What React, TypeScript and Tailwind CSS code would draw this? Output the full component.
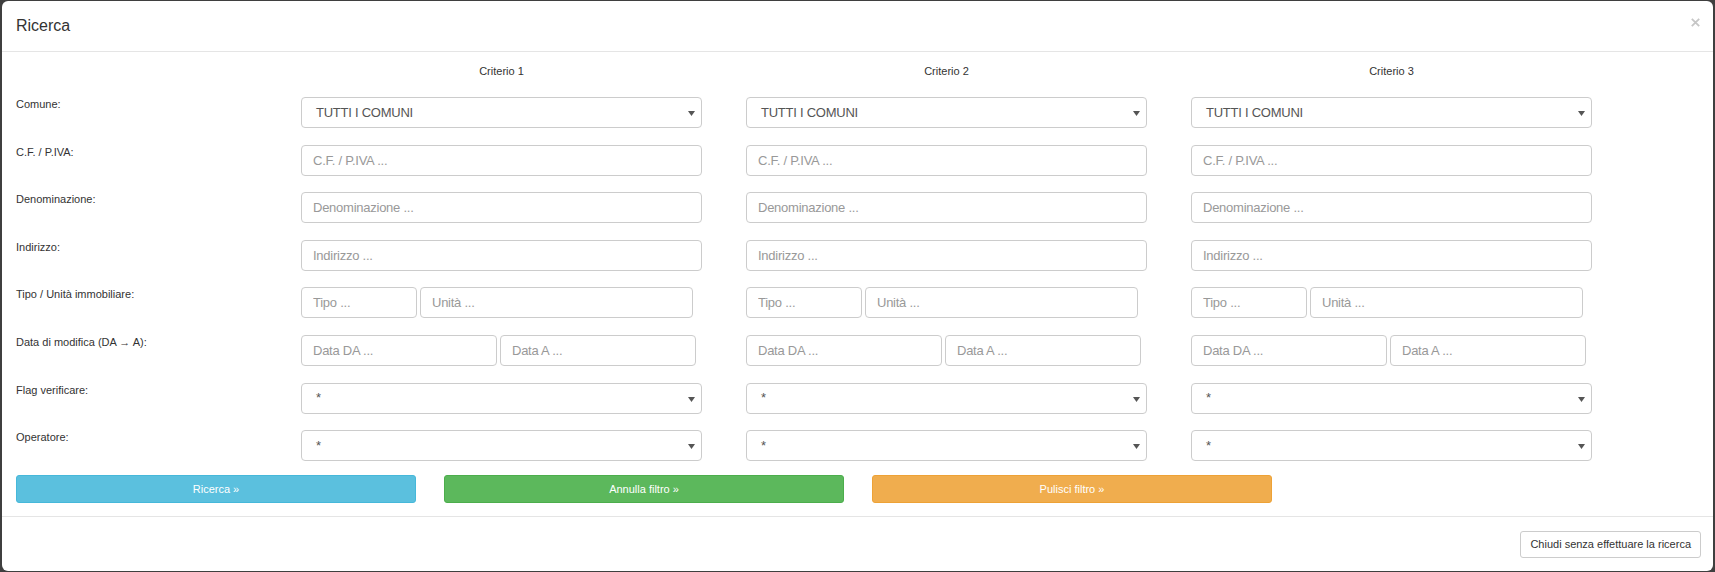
import React from "react";

const CRITERI = [1, 2, 3];

const Arrow: React.FC = () => (
  <svg width="7" height="5" viewBox="0 0 7 5" className="absolute right-[6px] top-[13px]">
    <polygon points="0,0 7,0 3.5,5" fill="#555" />
  </svg>
);

const SelectBox: React.FC<{ value: string }> = ({ value }) => (
  <div className="relative flex h-[31px] w-[401px] items-center rounded-[4px] border border-[#ccc] bg-white pl-[14px] text-[13px] tracking-[-0.25px] text-[#555]">
    <span>{value}</span>
    <Arrow />
  </div>
);

const Field: React.FC<{ placeholder: string; className?: string }> = ({ placeholder, className = "w-[401px]" }) => (
  <input
    readOnly
    placeholder={placeholder}
    className={`h-[31px] rounded-[4px] border border-[#ccc] bg-white px-[11px] text-[13px] tracking-[-0.25px] text-[#555] outline-none placeholder:text-[#999] ${className}`}
  />
);

type Row = { label: string; cell: () => React.ReactNode };

const ROWS: Row[] = [
  { label: "Comune:", cell: () => <SelectBox value="TUTTI I COMUNI" /> },
  { label: "C.F. / P.IVA:", cell: () => <Field placeholder="C.F. / P.IVA ..." /> },
  { label: "Denominazione:", cell: () => <Field placeholder="Denominazione ..." /> },
  { label: "Indirizzo:", cell: () => <Field placeholder="Indirizzo ..." /> },
  {
    label: "Tipo / Unità immobiliare:",
    cell: () => (
      <div className="flex gap-[3px]">
        <Field placeholder="Tipo ..." className="w-[116px]" />
        <Field placeholder="Unità ..." className="w-[273px]" />
      </div>
    ),
  },
  {
    label: "Data di modifica (DA → A):",
    cell: () => (
      <div className="flex gap-[3px]">
        <Field placeholder="Data DA ..." className="w-[196px]" />
        <Field placeholder="Data A ..." className="w-[196px]" />
      </div>
    ),
  },
  { label: "Flag verificare:", cell: () => <SelectBox value="*" /> },
  { label: "Operatore:", cell: () => <SelectBox value="*" /> },
];

export default function App() {
  return (
    <div className="flex h-[572px] w-[1715px] flex-col bg-[#3f3f3f] px-[2px] pb-[1px] pt-[1px] font-['Liberation_Sans',Arial,sans-serif] text-[#333]">
      <div className="flex flex-1 flex-col rounded-[6px] bg-white">
        {/* header */}
        <div className="flex h-[51px] items-center justify-between border-b border-[#e5e5e5] pl-[14px] pr-[13px]">
          <h4 className="text-[16px] leading-[20px] text-[#333]">Ricerca</h4>
          <button aria-label="Chiudi" className="mb-[8px] flex h-[10px] w-[10px] items-center justify-center">
            <svg width="9" height="9" viewBox="0 0 9 9">
              <path d="M0.8 0.8 L8.2 8.2 M8.2 0.8 L0.8 8.2" stroke="#c6c6c6" strokeWidth="1.8" />
            </svg>
          </button>
        </div>

        {/* body */}
        <div className="px-[14px]">
          <div className="flex h-[45px] pt-[12px]">
            <div className="w-[285px] shrink-0" />
            <div className="flex gap-[44px]">
              {CRITERI.map((n) => (
                <div key={n} className="w-[401px] text-center text-[11px] leading-[15px]">
                  Criterio {n}
                </div>
              ))}
            </div>
          </div>

          <div className="flex flex-col gap-[16.6px]">
            {ROWS.map((row) => (
              <div key={row.label} className="flex h-[31px]">
                <div className="w-[285px] shrink-0 text-[11px] leading-[15px] text-[#333]">{row.label}</div>
                <div className="flex gap-[44px]">
                  {CRITERI.map((n) => (
                    <div key={n} className="w-[401px]">
                      {row.cell()}
                    </div>
                  ))}
                </div>
              </div>
            ))}
          </div>

          <div className="mt-[14px] flex gap-[28px] pb-[13px]">
            <button className="h-[28px] w-[400px] rounded-[3px] border border-[#46b8da] bg-[#5bc0de] text-[11px] text-white">
              Ricerca »
            </button>
            <button className="h-[28px] w-[400px] rounded-[3px] border border-[#4cae4c] bg-[#5cb85c] text-[11px] text-white">
              Annulla filtro »
            </button>
            <button className="h-[28px] w-[400px] rounded-[3px] border border-[#eea236] bg-[#f0ad4e] text-[11px] text-white">
              Pulisci filtro »
            </button>
          </div>
        </div>

        {/* footer */}
        <div className="flex flex-1 items-start justify-end border-t border-[#e5e5e5] pr-[12px] pt-[14px]">
          <button className="h-[27px] rounded-[3px] border border-[#ccc] bg-white px-[9px] text-[11px] text-[#333]">
            Chiudi senza effettuare la ricerca
          </button>
        </div>
      </div>
    </div>
  );
}
